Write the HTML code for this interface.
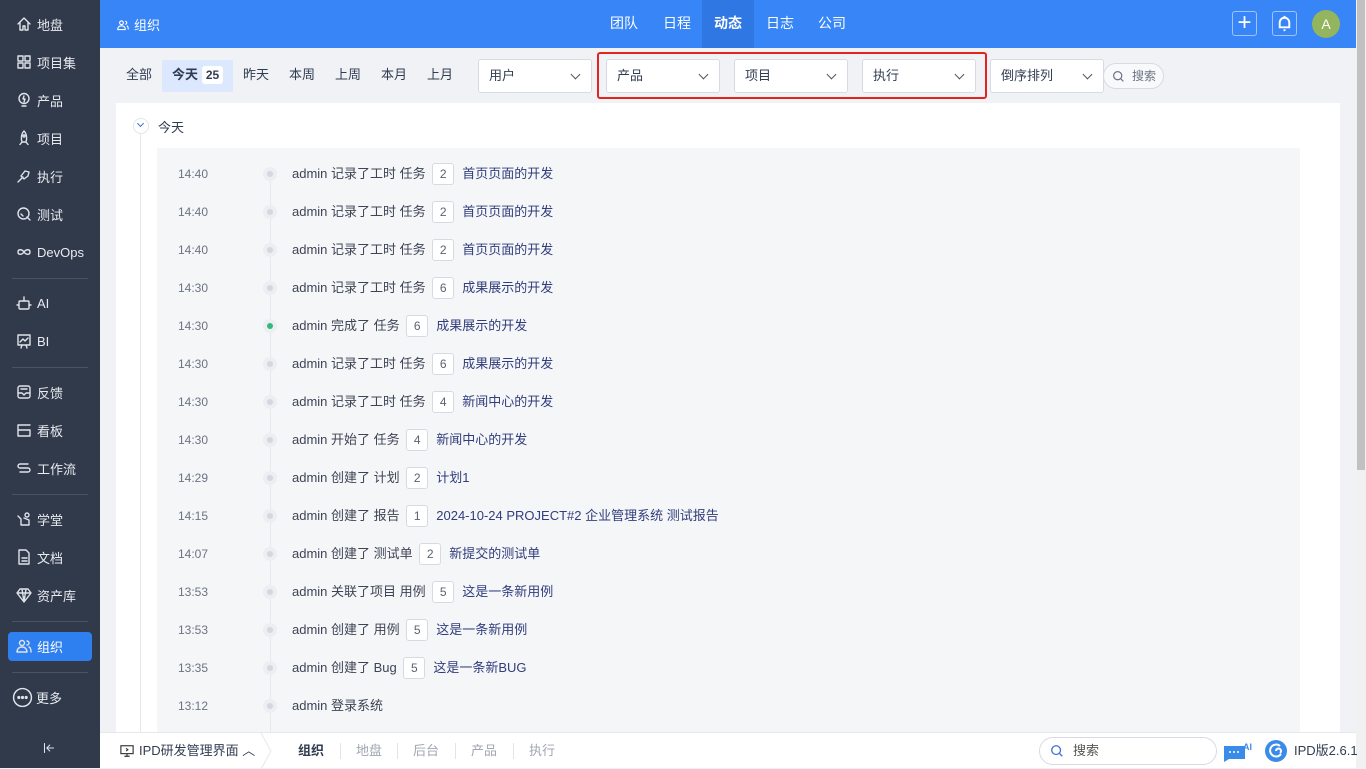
<!DOCTYPE html>
<html><head><meta charset="utf-8"><style>
*{margin:0;padding:0;box-sizing:border-box}
body{width:1366px;height:768px;overflow:hidden;font-family:"Liberation Sans","Noto Sans CJK SC",sans-serif;font-size:13px;color:#313c52;background:#f0f2f5;position:relative}
.side{position:absolute;left:0;top:0;width:100px;height:768px;background:#313a4b}
.si{position:absolute;left:16px;height:20px;color:#e8ebf0;font-size:13px;display:flex;align-items:center;gap:5px;white-space:nowrap}
.si svg{width:16px;height:16px;fill:none;stroke:#dfe3ea;stroke-width:1.4;stroke-linecap:round;stroke-linejoin:round}
.dv{position:absolute;left:12px;width:76px;height:1px;background:#4a5366}
.act{position:absolute;left:8px;top:632px;width:84px;height:29px;background:#2e7ff0;border-radius:4px}
.hdr{position:absolute;left:100px;top:0;width:1256px;height:48px;background:#3785f7;color:#fff}
.tab{position:absolute;top:0;height:48px;line-height:46px;font-size:14px;color:#fff}
.sb{position:absolute;left:1356px;top:0;width:10px;height:768px;background:#f1f1f1}
.sb i{position:absolute;left:1px;top:0;width:8px;height:470px;background:#c1c1c1}
.fl{position:absolute;top:66px;font-size:13px;color:#313c52;line-height:18px}
.sel{position:absolute;top:59px;height:34px;background:#fff;border:1px solid #d6dbe3;border-radius:3px;padding:0 10px;line-height:31px;font-size:13px}
.sel:after{content:"";position:absolute;right:12px;top:11px;width:6px;height:6px;border-right:1.2px solid #555;border-bottom:1.2px solid #555;transform:rotate(45deg)}
.panel{position:absolute;left:116px;top:103px;width:1224px;height:640px;background:#fff}
.inner{position:absolute;left:157px;top:148px;width:1143px;height:600px;background:#f5f6f8}
.row{position:absolute;left:0;height:20px;width:1000px;font-size:13px;line-height:20px}
.t{position:absolute;left:178px;color:#6b7384;font-size:12px;top:0;line-height:20px}
.dot{position:absolute;left:263px;top:3px;width:14px;height:14px;border-radius:50%;background:#eceef2}
.dot:after{content:"";position:absolute;left:4px;top:4px;width:6px;height:6px;border-radius:50%;background:#d3d7e0}
.dot.g:after{background:#2dbc7c}
.tx{position:absolute;left:292px;top:0;white-space:nowrap;color:#3d4455;line-height:20px}
.tx .n{display:inline-block;border:1px solid #d6dbe3;border-radius:3px;background:#fff;width:22px;height:22px;text-align:center;line-height:20px;margin:-1px 8px 0 3px;color:#5a6272;font-size:12px;vertical-align:top}
.tx .l{color:#313d7c}
.bot{position:absolute;left:100px;top:732px;width:1256px;height:36px;background:#fff;border-top:1px solid #e6e8ec}
.bt{position:absolute;top:9px;font-size:13px;color:#a0a6b2;white-space:nowrap;line-height:18px}
</style></head><body>
<div class="side">
<div class="act"></div>
<div class="si" style="top:14px"><svg viewBox="0 0 16 16"><path d="M2 8L8 2l6 6M4 7v7h3v-4h2v4h3V7"/></svg>地盘</div>
<div class="si" style="top:52px"><svg viewBox="0 0 16 16"><rect x="2" y="2" width="5" height="5"/><rect x="9" y="2" width="5" height="5"/><rect x="2" y="9" width="5" height="5"/><rect x="9" y="9" width="5" height="5"/></svg>项目集</div>
<div class="si" style="top:90px"><svg viewBox="0 0 16 16"><circle cx="8" cy="6.5" r="5"/><path d="M6 14h4M8 4l-1 3h2l-1 3"/></svg>产品</div>
<div class="si" style="top:128px"><svg viewBox="0 0 16 16"><path d="M8 1c3 3 3 8 2 11H6C5 9 5 4 8 1zM6 12l-2 2.5M10 12l2 2.5"/><circle cx="8" cy="6" r="1"/></svg>项目</div>
<div class="si" style="top:166px"><svg viewBox="0 0 16 16"><path d="M2 14l5-5M9 3l4 1-1 4-4 3-3-3z"/></svg>执行</div>
<div class="si" style="top:204px"><svg viewBox="0 0 16 16"><circle cx="7.5" cy="7.5" r="5.5"/><path d="M11 11l3 3M5 8l2 2"/></svg>测试</div>
<div class="si" style="top:242px"><svg viewBox="0 0 16 16"><path d="M8 8c-2-3-6-3-6 0s4 3 6 0 6-3 6 0-4 3-6 0"/></svg>DevOps</div>
<div class="dv" style="top:278px"></div>
<div class="si" style="top:293px"><svg viewBox="0 0 16 16"><rect x="3" y="6" width="10" height="8" rx="1"/><path d="M8 2v4M1 10h2M13 10h2"/></svg>AI</div>
<div class="si" style="top:331px"><svg viewBox="0 0 16 16"><rect x="2" y="2" width="12" height="10"/><path d="M4 9l3-3 2 2 3-3M6 12l-1 3M10 12l1 3"/></svg>BI</div>
<div class="dv" style="top:367px"></div>
<div class="si" style="top:382px"><svg viewBox="0 0 16 16"><rect x="2" y="2" width="12" height="12" rx="2"/><path d="M2 9h4l2 2 2-2h4M5 5h6"/></svg>反馈</div>
<div class="si" style="top:420px"><svg viewBox="0 0 16 16"><path d="M2 3h12M2 8h12v6H2zM2 3v5"/></svg>看板</div>
<div class="si" style="top:458px"><svg viewBox="0 0 16 16"><path d="M12 4H4a2 2 0 000 4h8a2 2 0 010 4H4"/></svg>工作流</div>
<div class="dv" style="top:494px"></div>
<div class="si" style="top:509px"><svg viewBox="0 0 16 16"><circle cx="11" cy="4" r="2"/><path d="M2 5l3 3v6h8V9L8 7"/></svg>学堂</div>
<div class="si" style="top:547px"><svg viewBox="0 0 16 16"><path d="M3 1h7l3 3v11H3zM6 9h5M6 12h5"/></svg>文档</div>
<div class="si" style="top:585px"><svg viewBox="0 0 16 16"><path d="M4 2h8l3 4-7 9-7-9zM1 6h14M6 2l2 13 2-13"/></svg>资产库</div>
<div class="dv" style="top:621px"></div>
<div class="si" style="top:636px;color:#fff"><svg viewBox="0 0 16 16"><circle cx="6" cy="5" r="2.5"/><path d="M1 14c0-3 2-5 5-5s5 2 5 5zM11 3a2 2 0 010 4M13 9c1.5.5 2 2.5 2 5"/></svg>组织</div>
<div class="dv" style="top:672px"></div>
<div class="si" style="top:687px;left:12px;gap:3px"><svg viewBox="0 0 20 20" style="width:21px;height:21px"><circle cx="10" cy="10" r="8.5"/><circle cx="6.5" cy="10" r=".8" fill="#dfe3ea"/><circle cx="10" cy="10" r=".8" fill="#dfe3ea"/><circle cx="13.5" cy="10" r=".8" fill="#dfe3ea"/></svg>更多</div>
<div class="si" style="top:738px;left:43px"><svg viewBox="0 0 16 16" style="width:12px;height:12px"><path d="M2 2v12M14 8H5M9 4L5 8l4 4"/></svg></div>
</div>
<div class="hdr">
<div style="position:absolute;left:17px;top:15px;font-size:13px;display:flex;gap:5px;align-items:center"><svg width="12" height="12" viewBox="0 0 16 16" fill="none" stroke="#fff" stroke-width="1.5"><circle cx="6" cy="5" r="2.5"/><path d="M1 14c0-3 2-5 5-5s5 2 5 5zM11 3a2 2 0 010 4M13 9c1.5.5 2 2.5 2 5"/></svg>组织</div>
<div class="tab" style="left:510px">团队</div>
<div class="tab" style="left:563px">日程</div>
<div class="tab" style="left:602px;width:52px;background:#2f77e3;text-align:center;font-weight:bold">动态</div>
<div class="tab" style="left:666px">日志</div>
<div class="tab" style="left:718px">公司</div>
<div style="position:absolute;left:1132px;top:11px;width:25px;height:25px;border:1px solid #9fc3fa;border-radius:3px;color:#fff;font-size:24px;line-height:22px;text-align:center">+</div>
<div style="position:absolute;left:1172px;top:11px;width:25px;height:25px;border:1px solid #9fc3fa;border-radius:3px"><svg width="23" height="23" viewBox="0 0 24 24" fill="none" stroke="#fff" stroke-width="2"><path d="M7 16V11a5 5 0 0110 0v5H7zM6 16h12M11 19h2M12 4v2"/></svg></div>
<div style="position:absolute;left:1212px;top:10px;width:28px;height:28px;border-radius:50%;background:#93b55e;color:#fff;text-align:center;line-height:28px;font-size:14px">A</div>
</div>
<div class="sb"><i></i></div>
<div class="fl" style="left:126px">全部</div>
<div style="position:absolute;left:162px;top:60px;width:71px;height:32px;background:#dbe8fd;border-radius:2px"></div>
<div class="fl" style="left:172px;font-weight:bold">今天</div>
<div style="position:absolute;left:202px;top:66px;width:21px;height:18px;background:#fff;border-radius:3px;font-size:12px;font-weight:bold;text-align:center;line-height:18px">25</div>
<div class="fl" style="left:243px">昨天</div>
<div class="fl" style="left:289px">本周</div>
<div class="fl" style="left:335px">上周</div>
<div class="fl" style="left:381px">本月</div>
<div class="fl" style="left:427px">上月</div>
<div class="sel" style="left:478px;width:114px">用户</div>
<div class="sel" style="left:606px;width:114px">产品</div>
<div class="sel" style="left:734px;width:114px">项目</div>
<div class="sel" style="left:862px;width:114px">执行</div>
<div style="position:absolute;left:597px;top:52px;width:390px;height:47px;border:2px solid #e3251f;border-radius:3px"></div>
<div class="sel" style="left:990px;width:114px">倒序排列</div>
<div style="position:absolute;left:1103px;top:63px;width:61px;height:26px;border:1px solid #d6dbe3;border-radius:13px;background:#f8f9fb;font-size:12px;line-height:24px;padding-left:28px;color:#6b7384">搜索<svg style="position:absolute;left:8px;top:6px" width="13" height="13" viewBox="0 0 16 16" fill="none" stroke="#6b7384" stroke-width="1.5"><circle cx="7" cy="7" r="5"/><path d="M11 11l3 3"/></svg></div>
<div class="panel"></div>
<div style="position:absolute;left:133px;top:118px;width:16px;height:16px;border-radius:50%;border:1.5px solid #e2e5eb;background:#fff"><div style="position:absolute;left:4px;top:2px;width:5px;height:5px;border-right:1.3px solid #3f6fd8;border-bottom:1.3px solid #3f6fd8;transform:rotate(45deg)"></div></div>
<div style="position:absolute;left:140px;top:134px;width:1px;height:600px;background:#e6e8ec"></div>
<div style="position:absolute;left:158px;top:117px;font-size:13px">今天</div>
<div class="inner"></div>
<div style="position:absolute;left:270px;top:174px;width:1px;height:560px;background:#e6e8ec"></div>
<div style="position:absolute;left:0;top:0">
<div class="row" style="top:164px"><span class="t">14:40</span><span class="dot"></span><span class="tx">admin 记录了工时 任务 <span class="n">2</span><span class="l">首页页面的开发</span></span></div>
<div class="row" style="top:202px"><span class="t">14:40</span><span class="dot"></span><span class="tx">admin 记录了工时 任务 <span class="n">2</span><span class="l">首页页面的开发</span></span></div>
<div class="row" style="top:240px"><span class="t">14:40</span><span class="dot"></span><span class="tx">admin 记录了工时 任务 <span class="n">2</span><span class="l">首页页面的开发</span></span></div>
<div class="row" style="top:278px"><span class="t">14:30</span><span class="dot"></span><span class="tx">admin 记录了工时 任务 <span class="n">6</span><span class="l">成果展示的开发</span></span></div>
<div class="row" style="top:316px"><span class="t">14:30</span><span class="dot g"></span><span class="tx">admin 完成了 任务 <span class="n">6</span><span class="l">成果展示的开发</span></span></div>
<div class="row" style="top:354px"><span class="t">14:30</span><span class="dot"></span><span class="tx">admin 记录了工时 任务 <span class="n">6</span><span class="l">成果展示的开发</span></span></div>
<div class="row" style="top:392px"><span class="t">14:30</span><span class="dot"></span><span class="tx">admin 记录了工时 任务 <span class="n">4</span><span class="l">新闻中心的开发</span></span></div>
<div class="row" style="top:430px"><span class="t">14:30</span><span class="dot"></span><span class="tx">admin 开始了 任务 <span class="n">4</span><span class="l">新闻中心的开发</span></span></div>
<div class="row" style="top:468px"><span class="t">14:29</span><span class="dot"></span><span class="tx">admin 创建了 计划 <span class="n">2</span><span class="l">计划1</span></span></div>
<div class="row" style="top:506px"><span class="t">14:15</span><span class="dot"></span><span class="tx">admin 创建了 报告 <span class="n">1</span><span class="l">2024-10-24 PROJECT#2 企业管理系统 测试报告</span></span></div>
<div class="row" style="top:544px"><span class="t">14:07</span><span class="dot"></span><span class="tx">admin 创建了 测试单 <span class="n">2</span><span class="l">新提交的测试单</span></span></div>
<div class="row" style="top:582px"><span class="t">13:53</span><span class="dot"></span><span class="tx">admin 关联了项目 用例 <span class="n">5</span><span class="l">这是一条新用例</span></span></div>
<div class="row" style="top:620px"><span class="t">13:53</span><span class="dot"></span><span class="tx">admin 创建了 用例 <span class="n">5</span><span class="l">这是一条新用例</span></span></div>
<div class="row" style="top:658px"><span class="t">13:35</span><span class="dot"></span><span class="tx">admin 创建了 Bug <span class="n">5</span><span class="l">这是一条新BUG</span></span></div>
<div class="row" style="top:696px"><span class="t">13:12</span><span class="dot"></span><span class="tx">admin 登录系统</span></div>
</div>
<div class="bot">
<svg style="position:absolute;left:20px;top:11px" width="14" height="14" viewBox="0 0 16 16" fill="none" stroke="#333" stroke-width="1.3"><rect x="1" y="2" width="14" height="9"/><path d="M5 14h6M8 11v3M7 5l2 1.5L7 8"/></svg>
<div class="bt" style="left:39px;color:#313c52">IPD研发管理界面 ︿</div>
<svg style="position:absolute;left:160px;top:0" width="14" height="36"><path d="M1 0l10 18L1 36" fill="none" stroke="#e6e8ec"/></svg>
<div class="bt" style="left:198px;color:#313c52;font-weight:bold">组织</div>
<div style="position:absolute;left:240px;top:10px;width:1px;height:16px;background:#e1e4e8"></div>
<div class="bt" style="left:256px">地盘</div>
<div style="position:absolute;left:297px;top:10px;width:1px;height:16px;background:#e1e4e8"></div>
<div class="bt" style="left:313px">后台</div>
<div style="position:absolute;left:355px;top:10px;width:1px;height:16px;background:#e1e4e8"></div>
<div class="bt" style="left:371px">产品</div>
<div style="position:absolute;left:413px;top:10px;width:1px;height:16px;background:#e1e4e8"></div>
<div class="bt" style="left:429px">执行</div>
<div style="position:absolute;left:939px;top:4px;width:178px;height:28px;border:1px solid #d6dbe3;border-radius:14px;padding-left:33px;line-height:26px;color:#555">搜索<svg style="position:absolute;left:10px;top:6px" width="14" height="14" viewBox="0 0 16 16" fill="none" stroke="#3f6fd8" stroke-width="1.5"><circle cx="7" cy="7" r="5"/><path d="M11 11l3 3"/></svg></div>
<svg style="position:absolute;left:1123px;top:8px" width="32" height="22" viewBox="0 0 32 22"><path d="M1 5h21v13H6l-5 3z" fill="#3b8be8"/><circle cx="7" cy="11" r="1" fill="#fff"/><circle cx="11" cy="11" r="1" fill="#fff"/><circle cx="15" cy="11" r="1" fill="#fff"/><text x="20" y="9" font-size="9" fill="#3b8be8" font-family="Liberation Sans" font-weight="bold">AI</text></svg>
<svg style="position:absolute;left:1164px;top:6px" width="24" height="24" viewBox="0 0 24 24"><circle cx="12" cy="12" r="11" fill="#3b8be8"/><path d="M16 7a6 6 0 10 1 8M12 12a2.5 2.5 0 114 2" fill="none" stroke="#fff" stroke-width="2"/></svg>
<div class="bt" style="left:1194px;color:#313c52">IPD版2.6.1</div>
</div>
</body></html>
